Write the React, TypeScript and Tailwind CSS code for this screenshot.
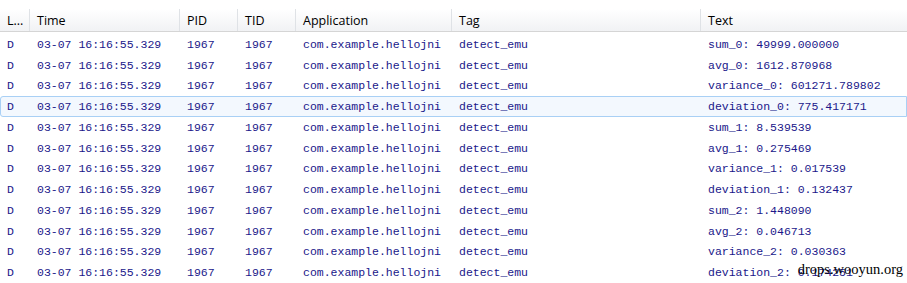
const cols = "grid grid-cols-[30px_150px_58px_58px_156px_249px_1fr]";

const headers = ["L...", "Time", "PID", "TID", "Application", "Tag", "Text"];

const texts = [
  "sum_0: 49999.000000",
  "avg_0: 1612.870968",
  "variance_0: 601271.789802",
  "deviation_0: 775.417171",
  "sum_1: 8.539539",
  "avg_1: 0.275469",
  "variance_1: 0.017539",
  "deviation_1: 0.132437",
  "sum_2: 1.448090",
  "avg_2: 0.046713",
  "variance_2: 0.030363",
  "deviation_2: 0.174251",
];

function LogRow({ text, selected }: { text: string; selected: boolean }) {
  const cells = ["D", "03-07 16:16:55.329", "1967", "1967", "com.example.hellojni", "detect_emu", text];
  return (
    <div
      className={[
        cols,
        "h-[20.75px] items-center whitespace-pre",
        selected ? "bg-[#f3f8fe] border border-[#a9d0f5] rounded-l-[3px]" : "border border-transparent",
      ].join(" ")}
    >
      {cells.map((c, i) => (
        <div key={i} className="pl-[6px] overflow-hidden">
          {c}
        </div>
      ))}
    </div>
  );
}

export default function App() {
  return (
    <div className="relative w-[907px] h-[283px] bg-white overflow-hidden">
      <div className="h-[9px]" />
      <div
        className={[
          cols,
          "h-[23px] bg-gradient-to-b from-white to-[#f1f2f4] border-b border-[#d5d5d5] text-[12.5px] text-black",
        ].join(" ")}
        style={{ fontFamily: '"Open Sans", "Noto Sans", sans-serif' }}
      >
        {headers.map((h, i) => (
          <div
            key={h}
            className={[
              "flex items-center pl-[7px] pt-[2px]",
              i < headers.length - 1 ? "border-r border-[#dfe2e6]" : "",
            ].join(" ")}
          >
            {h}
          </div>
        ))}
      </div>
      <div
        className="pt-[2px] text-[11.5px] text-[#20178a]"
        style={{ fontFamily: '"Liberation Mono", "Courier New", monospace' }}
      >
        {texts.map((t, i) => (
          <LogRow key={i} text={t} selected={i === 3} />
        ))}
      </div>
      <div
        className="absolute right-[4px] bottom-[7px] text-[14.5px] leading-none text-black"
        style={{ fontFamily: '"Liberation Serif", "Times New Roman", serif' }}
      >
        drops.wooyun.org
      </div>
    </div>
  );
}
